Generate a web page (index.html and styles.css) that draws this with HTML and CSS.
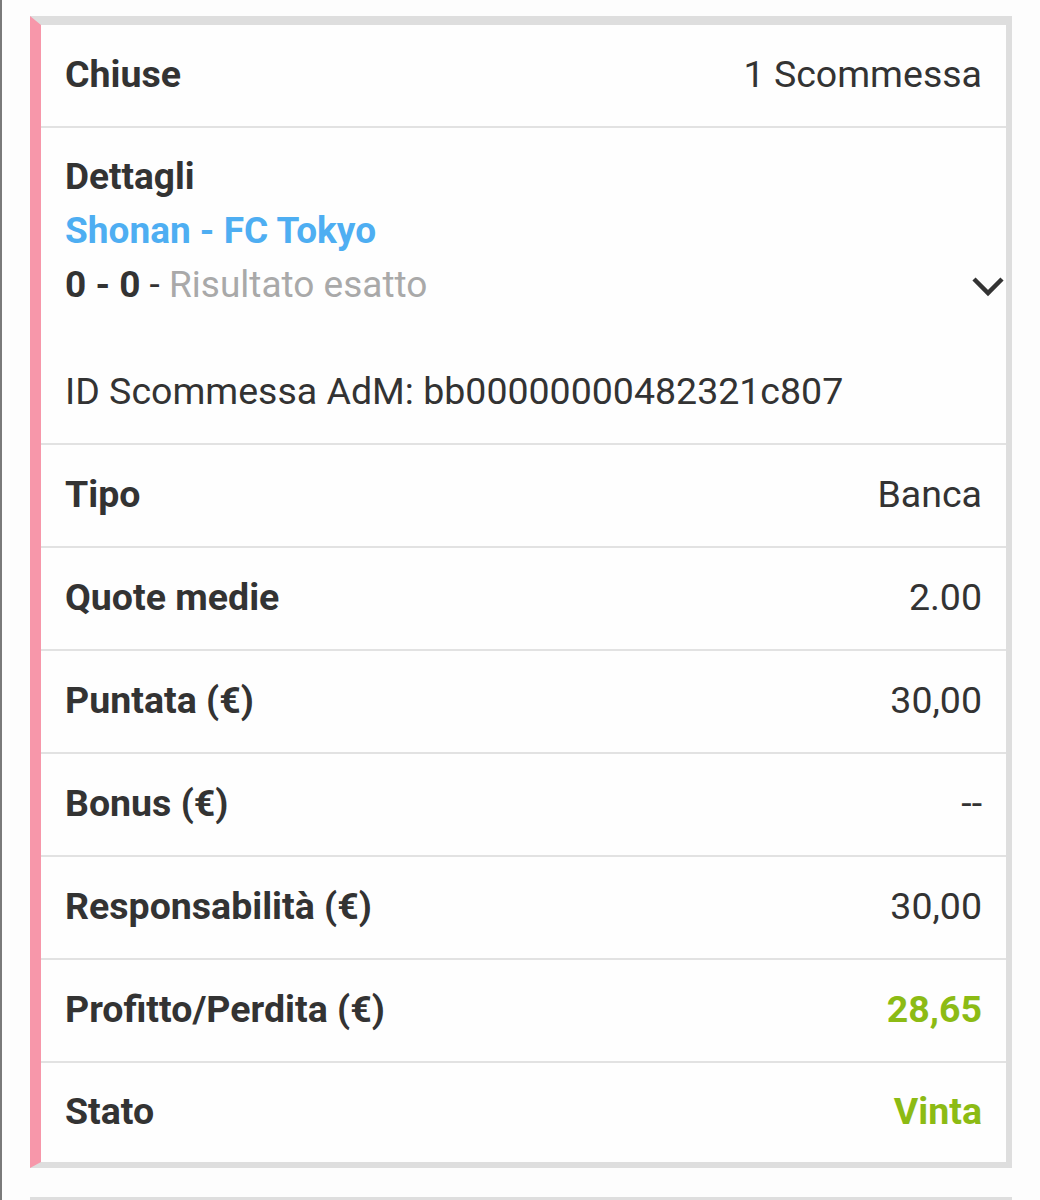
FILE: index.html
```html
<!DOCTYPE html>
<html lang="it">
<head>
    <meta charset="UTF-8">
    <meta name="viewport" content="width=device-width, initial-scale=1.0">
    <title>Scommessa chiusa</title>
    <link rel="stylesheet" href="styles.css">
</head>
<body>
    <div class="screen">
        <div class="bet-card">
            <div class="row">
                <span class="label">Chiuse</span>
                <span class="value">1 Scommessa</span>
            </div>

            <div class="details">
                <div class="details-head">
                    <div class="details-text">
                        <div class="details-title">Dettagli</div>
                        <div class="event">Shonan - FC Tokyo</div>
                        <div class="selection"><b>0 - 0</b> - <span class="market">Risultato esatto</span></div>
                    </div>
                    <svg class="chevron" width="32" height="22" viewBox="0 0 32 22">
                        <path d="M2 3 L16 17 L30 3" fill="none" stroke="#333" stroke-width="4.5"/>
                    </svg>
                </div>
                <div class="bet-id">ID Scommessa AdM: bb00000000482321c807</div>
            </div>

            <div class="row">
                <span class="label">Tipo</span>
                <span class="value">Banca</span>
            </div>
            <div class="row">
                <span class="label">Quote medie</span>
                <span class="value">2.00</span>
            </div>
            <div class="row">
                <span class="label">Puntata (€)</span>
                <span class="value">30,00</span>
            </div>
            <div class="row">
                <span class="label">Bonus (€)</span>
                <span class="value">--</span>
            </div>
            <div class="row">
                <span class="label">Responsabilità (€)</span>
                <span class="value">30,00</span>
            </div>
            <div class="row">
                <span class="label">Profitto/Perdita (€)</span>
                <span class="value win">28,65</span>
            </div>
            <div class="row">
                <span class="label">Stato</span>
                <span class="value win">Vinta</span>
            </div>
        </div>

        <div class="bet-card next"></div>
    </div>
</body>
</html>
```

FILE: styles.css
```css
/* Page */
html, body {
    margin: 0;
    padding: 0;
    background: #fdfdfd;
    font-family: Roboto, "Liberation Sans", sans-serif;
    color: #333;
}

.screen {
    border-left: 2px solid #7a7a7a;
    min-height: 1200px;
    padding-top: 16px;
    box-sizing: border-box;
}

/* Bet card */
.bet-card {
    margin: 0 28px 0 28px;
    background: #fefefe;
    border-top: 9px solid #dedede;
    border-right: 6px solid #dedede;
    border-bottom: 6px solid #dedede;
    border-left: 11px solid #f797aa;
}

.bet-card.next {
    margin-top: 29px;
    border-left-color: #dedede;
    height: 40px;
}

/* Simple label / value rows */
.row {
    display: flex;
    justify-content: space-between;
    align-items: center;
    box-sizing: border-box;
    height: 103px;
    padding: 0 24px 3px;
    border-bottom: 2px solid #e2e2e2;
    font-size: 37.5px;
}

.row:last-child {
    border-bottom: none;
    height: 99px;
}

.label {
    font-weight: bold;
}

.value.win {
    color: #8cbb14;
    font-weight: bold;
}

/* Details block */
.details {
    padding: 22px 24px 25px;
    border-bottom: 2px solid #e2e2e2;
    font-size: 37.5px;
}

.details-head {
    display: flex;
    justify-content: space-between;
    align-items: flex-end;
}

.details-title,
.event,
.selection {
    line-height: 54px;
}

.details-title {
    font-size: 37px;
    font-weight: bold;
}

.event {
    font-size: 37px;
    font-weight: bold;
    color: #4eaef2;
}

.selection {
    font-size: 37px;
}

.market {
    color: #a9a9a9;
}

.chevron {
    margin-right: -22px;
    margin-bottom: 14px;
}

.bet-id {
    margin-top: 52px;
    line-height: 54px;
}
```
